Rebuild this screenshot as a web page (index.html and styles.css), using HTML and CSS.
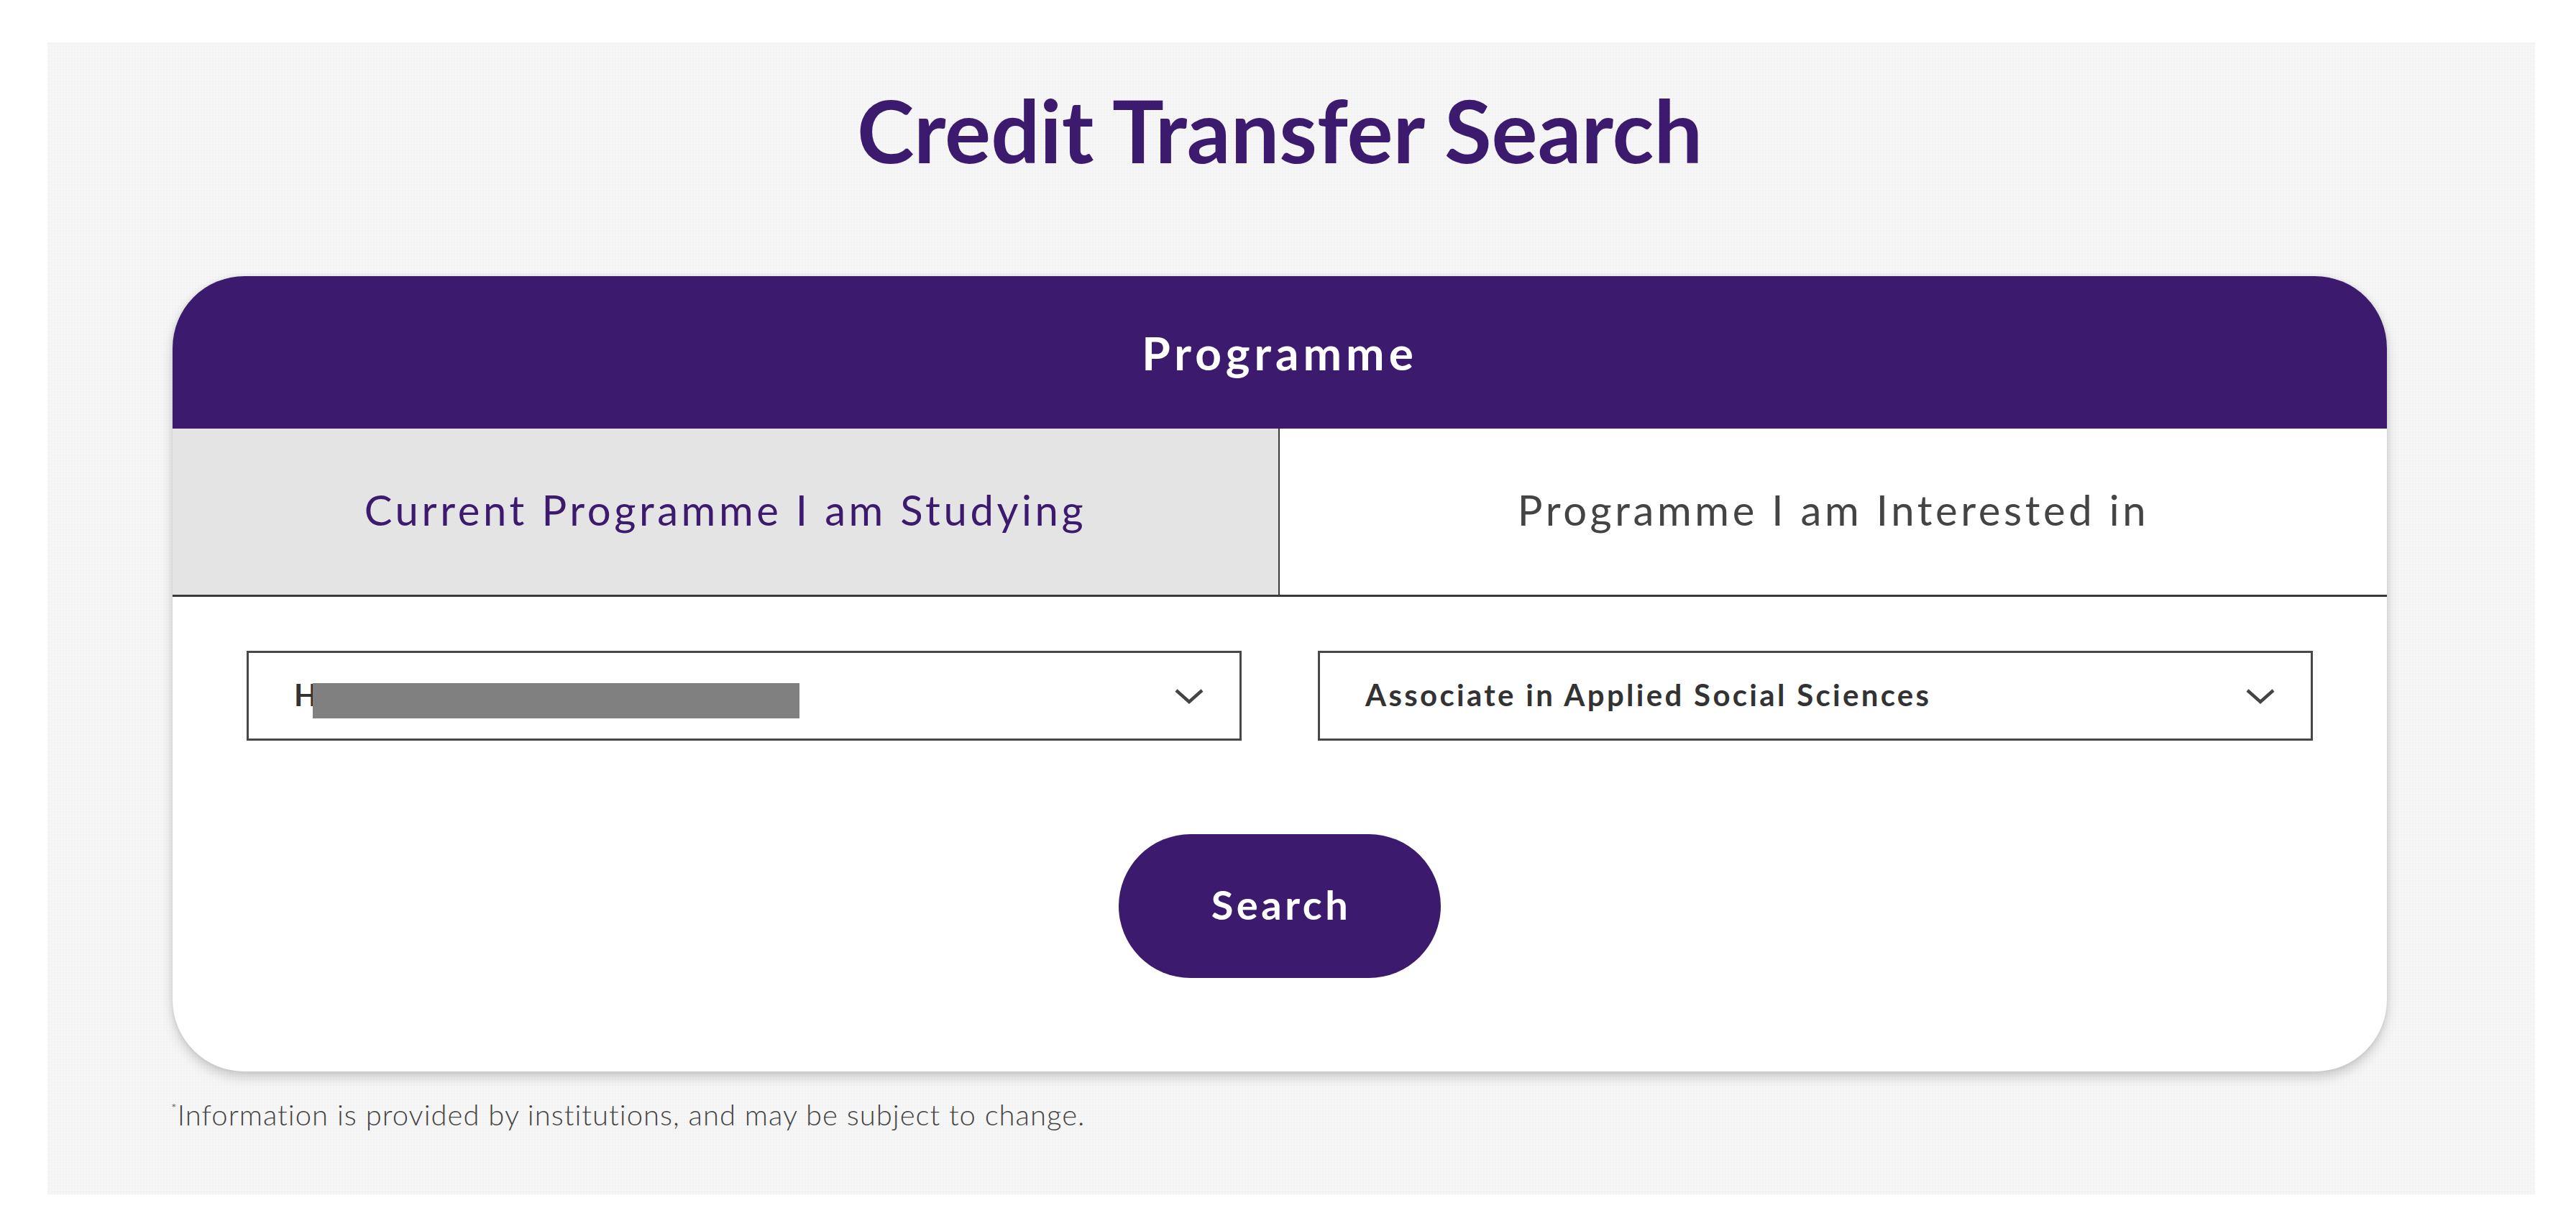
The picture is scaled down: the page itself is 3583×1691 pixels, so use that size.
FILE: index.html
```html
<!DOCTYPE html>
<html lang="en">
<head>
<meta charset="utf-8">
<title>Credit Transfer Search</title>
<link rel="stylesheet" href="styles.css">
</head>
<body>
<main class="panel">
  <h1 class="title">Credit Transfer Search</h1>
  <section class="card">
    <header class="card-head">Programme</header>
    <div class="tabs">
      <div class="tab tab-active">Current Programme I am Studying</div>
      <div class="tab">Programme I am Interested in</div>
    </div>
    <div class="card-body">
      <div class="selects">
        <div class="select">
          <span class="select-text">H<span class="redact"></span></span>
          <svg class="chev" viewBox="0 0 40 22" width="40" height="22"><path d="M2 3 L20 19 L38 3" fill="none" stroke="#444" stroke-width="4.5"/></svg>
        </div>
        <div class="select">
          <span class="select-text">Associate in Applied Social Sciences</span>
          <svg class="chev" viewBox="0 0 40 22" width="40" height="22"><path d="M2 3 L20 19 L38 3" fill="none" stroke="#444" stroke-width="4.5"/></svg>
        </div>
      </div>
      <div class="actions">
        <button class="btn" type="button">Search</button>
      </div>
    </div>
  </section>
  <p class="note"><sup>*</sup>Information is provided by institutions, and may be subject to change.</p>
</main>
</body>
</html>
```
FILE: styles.css
```css
html, body {
  margin: 0;
  padding: 0;
  background: #ffffff;
}
body {
  font-family: "Lato", "Open Sans", sans-serif;
  color: #333;
}
.panel {
  margin: 59px 57px 0 66px;
  height: 1602px;
  box-sizing: border-box;
  padding: 51px 206px 0 174px;
  background-color: #f6f6f6;
  background-image: radial-gradient(rgba(0,0,0,0.02) 1px, transparent 1px);
  background-size: 4px 4px;
}
.title {
  margin: 0;
  text-align: center;
  font-size: 120px;
  font-weight: 700;
  line-height: 1.2;
  color: #3c1a6e;
  position: relative;
  top: -1px;
}
.card {
  margin-top: 130px;
  background: #fff;
  border-radius: 100px;
  overflow: hidden;
  box-shadow: 0 8px 16px rgba(0,0,0,0.18), 0 0 6px rgba(0,0,0,0.08);
}
.card-head {
  height: 212px;
  background: #3c1a6e;
  color: #fff;
  display: flex;
  align-items: center;
  justify-content: center;
  font-size: 64px;
  font-weight: 700;
  letter-spacing: 6px;
}
.tabs {
  display: grid;
  grid-template-columns: 1fr 1fr;
  height: 234px;
  box-sizing: border-box;
  border-bottom: 3px solid #3a3a3a;
}
.tab {
  display: flex;
  align-items: center;
  justify-content: center;
  font-size: 58px;
  letter-spacing: 4.6px;
  color: #444;
  padding-bottom: 6px;
}
.tab-active {
  background: #e4e4e4;
  color: #3c1a6e;
  border-right: 2px solid #3a3a3a;
}
.card-body {
  padding: 75px 103px 130px;
}
.selects {
  display: grid;
  grid-template-columns: 1fr 1fr;
  gap: 106px;
}
.select {
  height: 125px;
  box-sizing: border-box;
  border: 3px solid #484848;
  display: flex;
  align-items: center;
  justify-content: space-between;
  padding: 0 50px 0 63px;
}
.select-text {
  font-size: 42px;
  font-weight: 700;
  letter-spacing: 3.3px;
  color: #333;
  display: flex;
  align-items: center;
  position: relative;
  top: -2px;
}
.redact {
  display: inline-block;
  width: 677px;
  height: 49px;
  background: #808080;
  margin-left: -10px;
  margin-top: 18px;
}
.chev {
  display: block;
}
.actions {
  display: flex;
  justify-content: center;
  margin-top: 130px;
}
.btn {
  width: 448px;
  height: 200px;
  border: 0;
  border-radius: 100px;
  background: #3c1a6e;
  color: #fff;
  font-family: "Lato", sans-serif;
  font-size: 56px;
  font-weight: 700;
  letter-spacing: 4.5px;
  padding: 0 0 6px 4px;
}
.note {
  margin: 36px 0 0 -2px;
  font-size: 40px;
  font-weight: 300;
  letter-spacing: 1px;
  color: #444;
}
.note sup {
  font-size: 18px;
  vertical-align: top;
  position: relative;
  top: 4px;
}
```
